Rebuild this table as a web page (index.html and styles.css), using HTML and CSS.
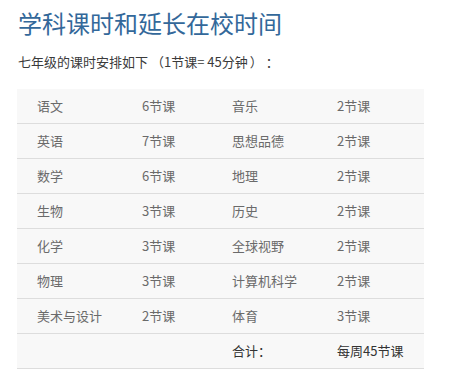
FILE: index.html
```html
<!DOCTYPE html>
<html lang="zh-CN">
<head>
<meta charset="utf-8">
<link rel="stylesheet" href="styles.css">
</head>
<body>
<div class="page">
  <h1 class="title">学科课时和延长在校时间</h1>
  <p class="intro">七年级的课时安排如下<span class="fw open">（</span>1节课= 45分钟<span class="fw close">）</span><span class="fw close">：</span></p>
  <table class="schedule">
    <colgroup>
      <col class="c1"><col class="c2"><col class="c3"><col class="c4">
    </colgroup>
    <tbody>
      <tr><td>语文</td><td>6节课</td><td>音乐</td><td>2节课</td></tr>
      <tr><td>英语</td><td>7节课</td><td>思想品德</td><td>2节课</td></tr>
      <tr><td>数学</td><td>6节课</td><td>地理</td><td>2节课</td></tr>
      <tr><td>生物</td><td>3节课</td><td>历史</td><td>2节课</td></tr>
      <tr><td>化学</td><td>3节课</td><td>全球视野</td><td>2节课</td></tr>
      <tr><td>物理</td><td>3节课</td><td>计算机科学</td><td>2节课</td></tr>
      <tr><td>美术与设计</td><td>2节课</td><td>体育</td><td>3节课</td></tr>
      <tr class="total"><td></td><td></td><td>合计：</td><td>每周45节课</td></tr>
    </tbody>
  </table>
</div>
</body>
</html>
```

FILE: styles.css
```css
html, body {
  margin: 0;
  padding: 0;
  background: #ffffff;
}
.page {
  padding: 6px 0 0 17px;
  font-family: "Noto Sans CJK SC", "Noto Sans", sans-serif;
  text-spacing-trim: space-all;
}
.title {
  margin: 0;
  font-size: 24px;
  line-height: 34px;
  font-weight: normal;
  color: #33689a;
  padding-left: 1px;
}
.intro {
  margin: 12px 0 0 0;
  padding-left: 1px;
  font-size: 13px;
  line-height: 20px;
  color: #3a3a3a;
}
.fw {
  display: inline-block;
  width: 14px;
}
.fw.open {
  text-align: right;
  margin-left: 2px;
}
.fw.close {
  text-align: left;
  margin-left: 2px;
}
.schedule {
  margin-top: 17px;
  width: 407px;
  border-collapse: collapse;
  table-layout: fixed;
  background: #f8f8f8;
  font-size: 13px;
  color: #6a6a6a;
}
.c1 { width: 105px; }
.c2 { width: 90px; }
.c3 { width: 105px; }
.c4 { width: 107px; }
.schedule td {
  height: 34px;
  padding: 0 0 0 20px;
  border-bottom: 1px solid #dddddd;
  white-space: nowrap;
  line-height: 20px;
  vertical-align: middle;
}
.schedule .total td {
  color: #333333;
}
```
